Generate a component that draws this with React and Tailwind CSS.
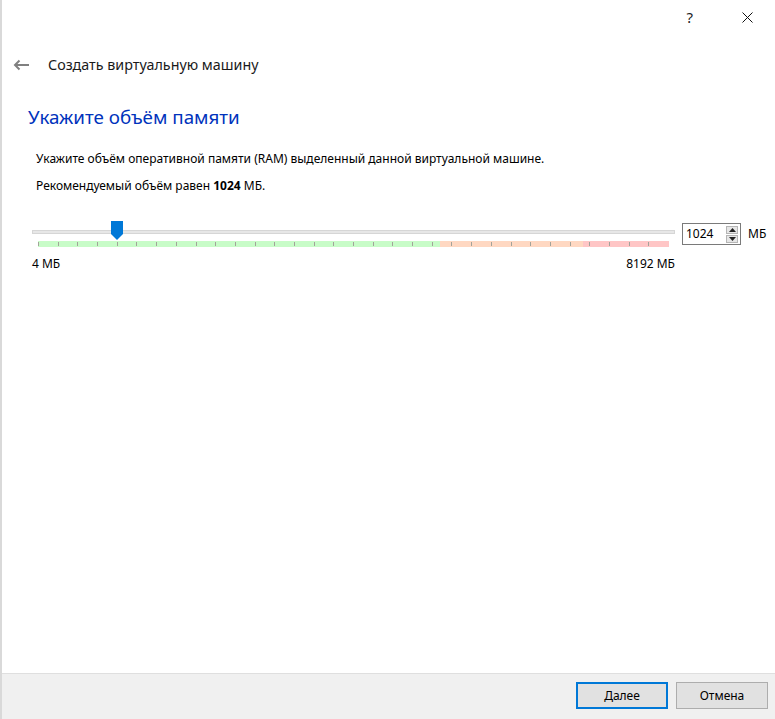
import React from "react";

const FONT = { fontFamily: '"Noto Sans", "Open Sans", sans-serif' };

function BackArrow() {
  return (
    <svg width="17" height="12" viewBox="0 0 17 12" fill="none">
      <path d="M16 6H2M6.5 1.5L2 6l4.5 4.5" stroke="#808080" strokeWidth="2" />
    </svg>
  );
}

function CloseIcon() {
  return (
    <svg width="11" height="11" viewBox="0 0 11 11">
      <path d="M0.5 0.5L10.5 10.5M10.5 0.5L0.5 10.5" stroke="#111" strokeWidth="1" />
    </svg>
  );
}

function Thumb() {
  return (
    <svg width="12" height="19" viewBox="0 0 12 19">
      <path d="M0 0H12V13L6 19L0 13Z" fill="#0078d7" />
    </svg>
  );
}

function SpinArrow({ up }) {
  return (
    <svg width="7" height="4" viewBox="0 0 7 4">
      <path d={up ? "M0 4L3.5 0L7 4Z" : "M0 0L3.5 4L7 0Z"} fill="#222" />
    </svg>
  );
}

const ticks = Array.from({ length: 32 }, (_, i) => i);

function MemorySlider() {
  return (
    <div className="w-[643px]">
      <div className="relative h-[20px] pt-[9px]">
        <div className="h-[4px] border border-[#d6d6d6] bg-[#e7e7e7]" />
        <div className="absolute top-0 left-[79px]">
          <Thumb />
        </div>
      </div>
      {/* zones: ok / warning / too much */}
      <div className="relative mx-[6px] flex h-[6px]">
        <div className="h-full w-[402px] bg-[#c8fcc8]" />
        <div className="h-full w-[143px] bg-[#ffd8c2]" />
        <div className="h-full flex-1 bg-[#ffc6c6]" />
        <div className="absolute inset-0 flex">
          {ticks.map((i) => (
            <div key={i} className="relative h-full w-[19.7px]">
              <div className="absolute left-0 top-[1px] h-[4px] w-px bg-[#a3a39a]" />
            </div>
          ))}
        </div>
      </div>
      <div className="mt-[9px] flex justify-between text-[12px] leading-[16px] text-black">
        <span>4 МБ</span>
        <span>8192 МБ</span>
      </div>
    </div>
  );
}

function SpinBox() {
  return (
    <div className="mt-[2px] flex h-[22px] w-[59px] items-center border border-[#7a7a7a] bg-white pl-[3px] pr-[2px]">
      <span className="flex-1 text-[12px] leading-[16px] text-black">1024</span>
      <div className="flex flex-col gap-px">
        <div className="flex h-[8px] w-[12px] items-center justify-center border border-[#b5b5b5] bg-[#e6e6e6]">
          <SpinArrow up />
        </div>
        <div className="flex h-[8px] w-[12px] items-center justify-center border border-[#b5b5b5] bg-[#e6e6e6]">
          <SpinArrow />
        </div>
      </div>
    </div>
  );
}

export default function App() {
  return (
    <div style={FONT} className="flex h-[719px] w-[775px] flex-col border-l-2 border-[#d9d9d9] bg-white">
      {/* title bar */}
      <div className="flex h-[34px] items-center justify-end">
        <span className="text-[15px] leading-[20px] text-[#222]">?</span>
        <div className="ml-[49px] mr-[22px] flex items-center">
          <CloseIcon />
        </div>
      </div>

      {/* back + wizard title */}
      <div className="mt-[16px] flex h-[30px] items-center pl-[11px]">
        <BackArrow />
        <span className="ml-[18px] text-[14.3px] text-[#1a1a1a]">Создать виртуальную машину</span>
      </div>

      <h1 className="mt-[23px] ml-[26px] h-[28px] text-[18.8px] leading-[28px] text-[#0033bc]">
        Укажите объём памяти
      </h1>

      <div className="ml-[34px] mt-[20px] text-[12px] leading-[16px] text-black">
        <p>Укажите объём оперативной памяти (RAM) выделенный данной виртуальной машине.</p>
        <p className="mt-[11px]">
          Рекомендуемый объём равен <b>1024</b> МБ.
        </p>
      </div>

      <div className="ml-[30px] mt-[27px] flex items-start">
        <MemorySlider />
        <div className="ml-[7px]">
          <SpinBox />
        </div>
        <span className="ml-[7px] mt-[5px] text-[12px] leading-[16px] text-black">МБ</span>
      </div>

      <div className="flex-1" />

      {/* footer */}
      <div className="flex h-[46px] justify-end gap-[8px] border-t border-[#dfdfdf] bg-[#f0f0f0] pt-[8px] pr-[7px]">
        <button className="h-[27px] w-[92px] border-2 border-[#0078d7] bg-[#e1e1e1] text-[12px] text-black">
          Далее
        </button>
        <button className="h-[27px] w-[92px] border border-[#adadad] bg-[#e1e1e1] text-[12px] text-black">
          Отмена
        </button>
      </div>
    </div>
  );
}
